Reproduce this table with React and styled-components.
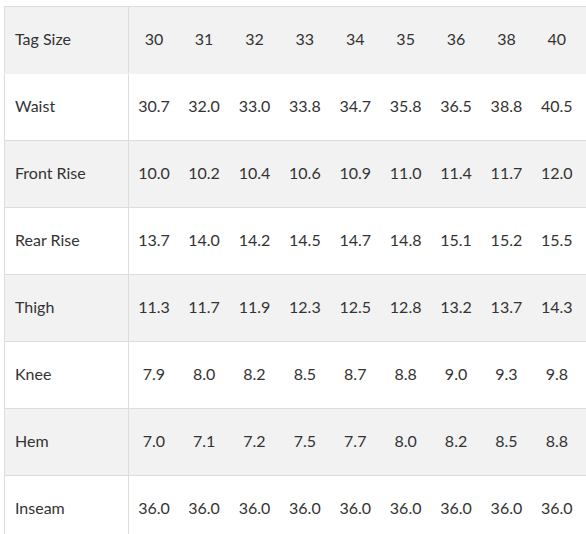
import React from "react";
import styled, { createGlobalStyle } from "styled-components";

const GlobalStyle = createGlobalStyle`
  body {
    margin: 0;
    background: #ffffff;
    font-family: Lato, "Noto Sans", sans-serif;
    overflow: hidden;
  }
`;

const Wrapper = styled.div`
  padding: 6px 0 0 4px;
  width: 586px;
  height: 534px;
  box-sizing: border-box;
  overflow: hidden;
`;

const Table = styled.table`
  border-collapse: collapse;
  table-layout: fixed;
  width: 582px;
  border-top: 1px solid #dddddd;
  border-left: 1px solid #dddddd;
  color: #333333;
  font-size: 16px;
`;

const Col = styled.col`
  width: ${(p) => p.$w}px;
`;

const Row = styled.tr`
  background: ${(p) => (p.$shaded ? "#f2f2f2" : "#ffffff")};
`;

const LabelCell = styled.td`
  height: 63px;
  padding: 0 0 3px 10px;
  text-align: left;
  border-right: 1px solid #dddddd;
  border-bottom: 1px solid ${(p) => (p.$head ? "#f2f2f2" : "#dddddd")};
  white-space: nowrap;
`;

const ValueCell = styled.td`
  height: 63px;
  padding: 0 ${(p) => (p.$last ? "4px" : "0")} 3px 0;
  text-align: center;
  border-bottom: 1px solid ${(p) => (p.$head ? "#f2f2f2" : "#dddddd")};
`;

const sizes = ["30", "31", "32", "33", "34", "35", "36", "38", "40"];

const rows = [
  ["Waist", ["30.7", "32.0", "33.0", "33.8", "34.7", "35.8", "36.5", "38.8", "40.5"]],
  ["Front Rise", ["10.0", "10.2", "10.4", "10.6", "10.9", "11.0", "11.4", "11.7", "12.0"]],
  ["Rear Rise", ["13.7", "14.0", "14.2", "14.5", "14.7", "14.8", "15.1", "15.2", "15.5"]],
  ["Thigh", ["11.3", "11.7", "11.9", "12.3", "12.5", "12.8", "13.2", "13.7", "14.3"]],
  ["Knee", ["7.9", "8.0", "8.2", "8.5", "8.7", "8.8", "9.0", "9.3", "9.8"]],
  ["Hem", ["7.0", "7.1", "7.2", "7.5", "7.7", "8.0", "8.2", "8.5", "8.8"]],
  ["Inseam", ["36.0", "36.0", "36.0", "36.0", "36.0", "36.0", "36.0", "36.0", "36.0"]],
];

export default function App() {
  return (
    <>
      <GlobalStyle />
      <Wrapper>
        <Table>
          <colgroup>
            <Col $w={124} />
            {sizes.map((s, i) => (
              <Col key={s} $w={i === sizes.length - 1 ? 54.4 : 50.4} />
            ))}
          </colgroup>
          <tbody>
            <Row $shaded>
              <LabelCell $head>Tag Size</LabelCell>
              {sizes.map((s, i) => (
                <ValueCell key={s} $head $last={i === sizes.length - 1}>
                  {s}
                </ValueCell>
              ))}
            </Row>
            {rows.map(([label, values], i) => (
              <Row key={label} $shaded={i % 2 === 1}>
                <LabelCell>{label}</LabelCell>
                {values.map((v, j) => (
                  <ValueCell key={j} $last={j === values.length - 1}>
                    {v}
                  </ValueCell>
                ))}
              </Row>
            ))}
          </tbody>
        </Table>
      </Wrapper>
    </>
  );
}
